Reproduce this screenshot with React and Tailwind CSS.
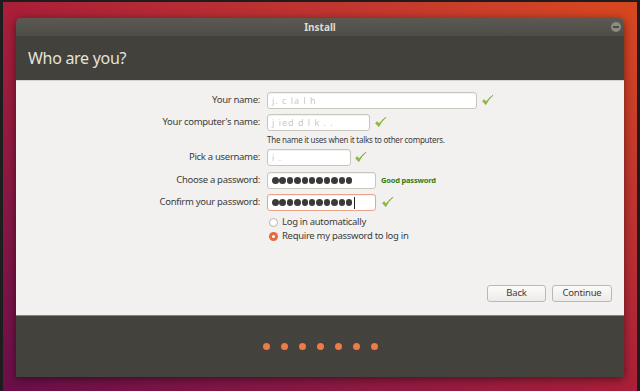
import React from "react";

const font = { fontFamily: '"Noto Sans", "Open Sans", sans-serif' };

const Check = ({ className = "" }) => (
    <svg viewBox="0 0 14 14" className={`w-[13px] h-[13px] ${className}`}>
        <path d="M1.8 7.6 L5.1 11.4 Q8 5.6 12.8 1.4 Q8.4 4.4 5.2 8.8 L3.5 6.1 Z" fill="#8cbf35" stroke="#7caf2a" strokeWidth="0.9" strokeLinejoin="round" />
    </svg>
);

const Field = ({ width, focused, children }) => (
    <div
        className={`h-[17px] rounded-[3px] border bg-white flex items-center px-[4px] overflow-hidden shadow-[inset_0_1px_1px_rgba(0,0,0,0.06)] ${
            focused ? "border-[#e9a48a]" : "border-[#c9c5bf]"
        } ${width}`}
    >
        {children}
    </div>
);

const Blur = ({ text }) => (
    <span className="text-[9px] text-[#c8c8c8] tracking-[1px] blur-[0.6px] whitespace-nowrap">{text}</span>
);

const Dots = ({ cursor }) => (
    <span className="flex items-center gap-[0.9px]">
        {Array.from({ length: 11 }).map((_, i) => (
            <span key={i} className="w-[6.5px] h-[6.5px] rounded-full bg-[#3a3a3a]" />
        ))}
        {cursor && <span className="w-px h-[12px] bg-[#222] ml-[1px]" />}
    </span>
);

const Row = ({ label, children, className = "" }) => (
    <div className={`flex items-center ${className}`}>
        <div className="w-[251px] text-right pr-[7px] text-[9.5px] tracking-[-0.3px] text-[#3c3c3c]">{label}</div>
        <div className="flex items-center">{children}</div>
    </div>
);

const Radio = ({ checked, label }) => (
    <div className="flex items-center h-[14px] pl-[253px]">
        {checked ? (
            <span className="w-[9px] h-[9px] rounded-full bg-[#e66a3a] flex items-center justify-center">
                <span className="w-[3px] h-[3px] rounded-full bg-white" />
            </span>
        ) : (
            <span className="w-[9px] h-[9px] rounded-full border border-[#b8b4ad] bg-white" />
        )}
        <span className="ml-[4px] text-[9.5px] tracking-[-0.3px] text-[#3c3c3c]">{label}</span>
    </div>
);

const Button = ({ children, width }) => (
    <button className={`h-[17px] ${width} rounded-[3px] border border-[#bcb8b1] bg-gradient-to-b from-[#fbfbfa] to-[#ecebe9] text-[9.5px] tracking-[-0.2px] text-[#3c3c3c] flex items-center justify-center`}>
        {children}
    </button>
);

export default function App() {
    return (
        <div
            style={font}
            className="w-[640px] h-[391px] overflow-hidden border-t-[2px] border-l-[3px] border-r-[3px] border-[#1d1d1d] bg-gradient-to-tr from-[#6a0e4a] via-[#aa1f38] to-[#d8481e]"
        >
            <div className="pt-[16px] pl-[13px]">
                <div className="w-[608px] shadow-[0_2px_10px_rgba(0,0,0,0.5)] rounded-t-[5px] overflow-hidden">
                    <div className="h-[18px] bg-gradient-to-b from-[#5c5953] to-[#4e4c47] flex items-center justify-center relative">
                        <span className="text-[10px] font-bold text-[#dedbd4]">Install</span>
                        <span className="absolute right-[3px] top-[4px] w-[10px] h-[10px] rounded-full bg-[#8d8a84] flex items-center justify-center">
                            <span className="w-[6px] h-[1.5px] bg-[#4e4c47]" />
                        </span>
                    </div>
                    <div className="h-[44px] bg-[#43413c] flex items-center pl-[12px]">
                        <span className="text-[16px] tracking-[-0.3px] text-[#e6e3dd]">Who are you?</span>
                    </div>
                    <div className="h-[235px] bg-[#f2f1f0] border-t border-[#d6d4d0] pt-[11px] flex flex-col">
                        <Row label="Your name:">
                            <Field width="w-[210px]"><Blur text="j. c  la l   h" /></Field>
                            <Check className="ml-[4px]" />
                        </Row>
                        <Row label="Your computer's name:" className="mt-[5px]">
                            <Field width="w-[103px]"><Blur text="j  ied  d   l  k  . ." /></Field>
                            <Check className="ml-[4px]" />
                        </Row>
                        <div className="pl-[251px] mt-[2px] h-[14px] flex items-center text-[8px] tracking-[-0.25px] text-[#3c3c3c]">
                            The name it uses when it talks to other computers.
                        </div>
                        <Row label="Pick a username:" className="mt-[2px]">
                            <Field width="w-[84px]"><Blur text="i   ." /></Field>
                            <Check className="ml-[3px]" />
                        </Row>
                        <Row label="Choose a password:" className="mt-[6px]">
                            <Field width="w-[109px]"><Dots /></Field>
                            <span className="ml-[5px] text-[7.5px] tracking-[-0.2px] font-bold text-[#2e7d14]">Good password</span>
                        </Row>
                        <Row label="Confirm your password:" className="mt-[5px]">
                            <Field width="w-[109px]" focused><Dots cursor /></Field>
                            <Check className="ml-[5px]" />
                        </Row>
                        <div className="mt-[4px]">
                            <Radio label="Log in automatically" />
                            <Radio checked label="Require my password to log in" />
                        </div>
                        <div className="mt-auto mb-[13px] flex justify-end gap-[6px] pr-[12px]">
                            <Button width="w-[59px]">Back</Button>
                            <Button width="w-[60px]">Continue</Button>
                        </div>
                    </div>
                    <div className="h-[62px] bg-[#43423d] flex items-center justify-center gap-[11px] border-t border-[#85837d]">
                        {Array.from({ length: 7 }).map((_, i) => (
                            <span key={i} className="w-[7px] h-[7px] rounded-full bg-[#ee7a45]" />
                        ))}
                    </div>
                </div>
            </div>
        </div>
    );
}
